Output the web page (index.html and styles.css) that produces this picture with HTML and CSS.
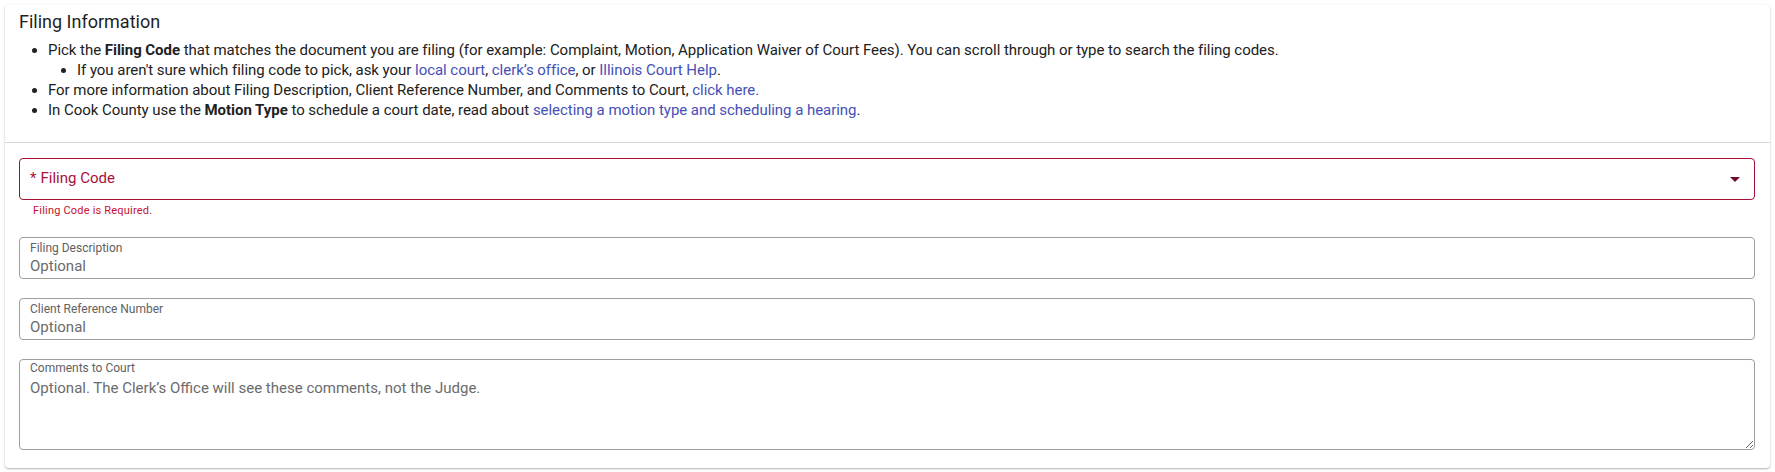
FILE: index.html
```html
<!DOCTYPE html>
<html lang="en">
<head>
<meta charset="utf-8">
<title>Filing Information</title>
<link rel="stylesheet" href="styles.css">
</head>
<body>
<section class="card">
  <div class="card-head">
    <h2 class="title">Filing Information</h2>
    <ul class="info">
      <li>Pick the <b>Filing Code</b> that matches the document you are filing (for example: Complaint, Motion, Application Waiver of Court Fees). You can scroll through or type to search the filing codes.
        <ul class="info sub">
          <li>If you aren't sure which filing code to pick, ask your <a href="#">local court</a>, <a href="#">clerk’s office</a>, or <a href="#">Illinois Court Help</a>.</li>
        </ul>
      </li>
      <li>For more information about Filing Description, Client Reference Number, and Comments to Court, <a href="#">click here.</a></li>
      <li>In Cook County use the <b>Motion Type</b> to schedule a court date, read about <a href="#">selecting a motion type and scheduling a hearing</a>.</li>
    </ul>
  </div>
  <div class="card-body">
    <div class="group">
      <div class="select invalid">
        <span class="select-label"><span class="req">*</span>Filing Code</span>
        <svg class="caret" width="10" height="5" viewBox="0 0 10 5"><path d="M0 0 L10 0 L5 5 Z" fill="#6e0b27"/></svg>
      </div>
      <div class="error">Filing Code is Required.</div>
    </div>
    <label class="field">
      <span class="field-label">Filing Description</span>
      <input class="field-input" type="text" placeholder="Optional">
    </label>
    <label class="field">
      <span class="field-label">Client Reference Number</span>
      <input class="field-input" type="text" placeholder="Optional">
    </label>
    <label class="field area">
      <span class="field-label">Comments to Court</span>
      <textarea class="field-text" placeholder="Optional. The Clerk’s Office will see these comments, not the Judge."></textarea>
    </label>
  </div>
</section>
</body>
</html>
```

FILE: styles.css
```css
* { box-sizing: border-box; }

html, body {
  margin: 0;
  background: #ffffff;
}

body {
  font-family: Roboto, "Liberation Sans", Arial, sans-serif;
  color: #212121;
  padding: 5px;
  width: 1775px;
}

.card {
  width: 1765px;
  background: #fff;
  border-radius: 4px;
  box-shadow: 0 1px 3px rgba(0,0,0,0.22), 0 1px 1px rgba(0,0,0,0.10);
}

.card-head {
  padding: 5px 14px 22px 14px;
  border-bottom: 1px solid #d8d8d8;
}

.title {
  margin: 0;
  font-size: 18px;
  line-height: 24px;
  font-weight: 400;
  color: #1f1f1f;
}

.info {
  margin: 6px 0 0 0;
  padding-left: 29px;
  list-style: disc;
  font-size: 15px;
  line-height: 20px;
  letter-spacing: -0.04px;
  color: #212121;
}

.info.sub {
  margin: 0;
}

.info b { font-weight: 700; }

.info a {
  color: #4450b6;
  text-decoration: none;
}

.card-body {
  padding: 15px 15px 18px 14px;
  display: flex;
  flex-direction: column;
  gap: 19px;
}

.group { display: flex; flex-direction: column; }

.select {
  height: 42px;
  border: 1px solid #a50f34;
  border-radius: 4px;
  display: flex;
  align-items: center;
  justify-content: space-between;
  padding: 0 14px 0 10px;
}

.select-label {
  font-size: 15px;
  color: #a8113b;
  line-height: 18px;
  padding-bottom: 3px;
}

.req { margin-right: 4px; }

.caret { display: block; }

.error {
  margin-top: 4px;
  padding-left: 14px;
  font-size: 11px;
  line-height: 14px;
  color: #c8102e;
  letter-spacing: 0.2px;
}

.field {
  display: flex;
  flex-direction: column;
  border: 1px solid #9e9e9e;
  border-radius: 4px;
  padding: 3px 10px 2px 10px;
  height: 42px;
}

.field-label {
  font-size: 12px;
  line-height: 14px;
  color: #616161;
}

.field-input {
  border: none;
  outline: none;
  padding: 0;
  margin: 2px 0 0 0;
  font-family: inherit;
  font-size: 15px;
  line-height: 18px;
  height: 18px;
  color: #212121;
  background: transparent;
}

.field-input::placeholder,
.field-text::placeholder {
  color: #6b6b6b;
  opacity: 1;
}

.field.area {
  height: 91px;
  padding: 1px 0 0 10px;
}

.field-text {
  flex: 1;
  border: none;
  outline: none;
  padding: 4px 0 0 0;
  margin: 0;
  font-family: inherit;
  font-size: 15px;
  line-height: 18px;
  color: #212121;
  background: transparent;
  resize: vertical;
}
```
